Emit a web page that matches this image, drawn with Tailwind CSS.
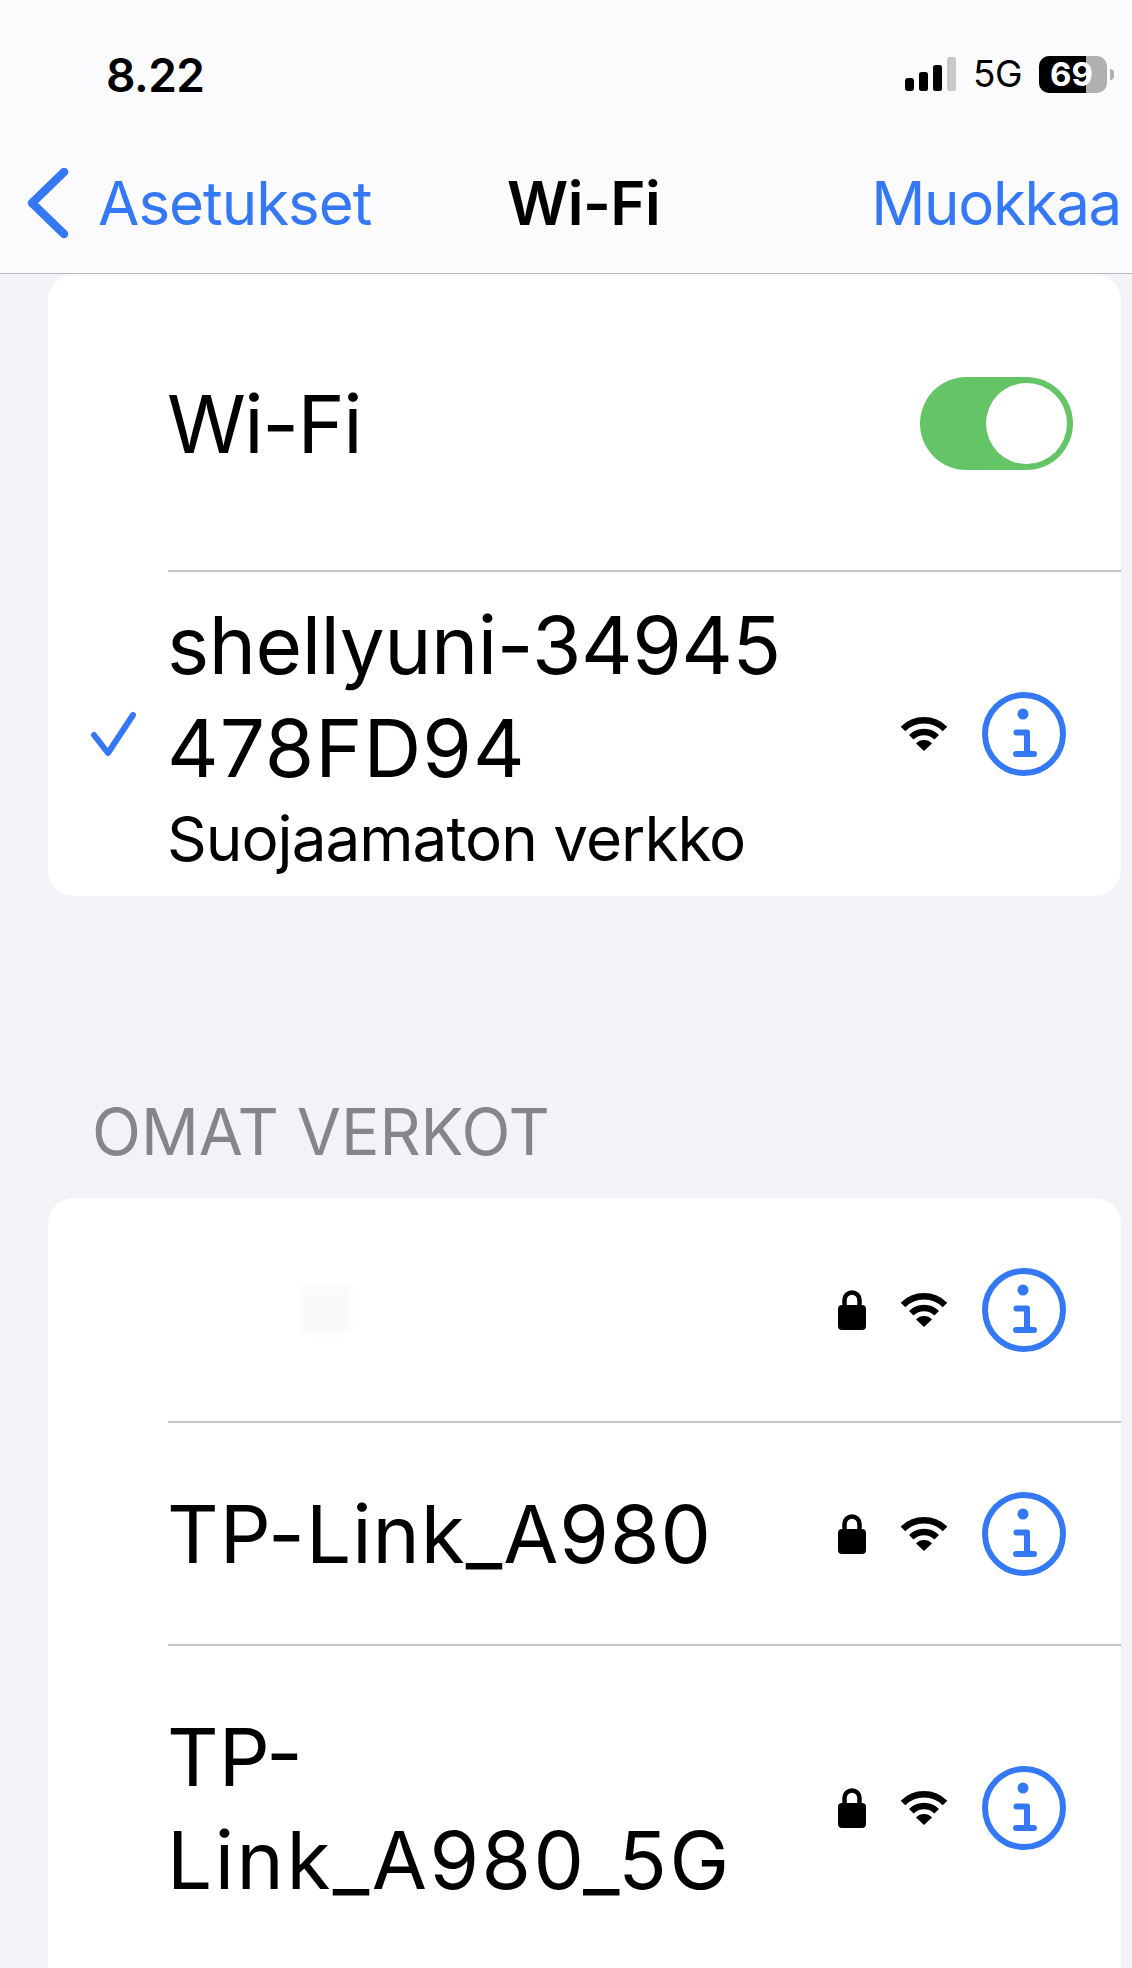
<!DOCTYPE html>
<html lang="fi">
<head>
<meta charset="UTF-8">
<title>Wi-Fi</title>
<script src="https://cdn.jsdelivr.net/npm/@tailwindcss/browser@4"></script>
</head>
<body class="bg-[#f2f2f7] font-['Inter','Liberation_Sans',sans-serif] text-black">
<div class="w-[1132px] h-[1968px] overflow-hidden">

  <!-- Header -->
  <header class="h-[274px] bg-[#fbfbfe] border-b border-[#b9b9bb] flex flex-col">
    <div class="h-[147px] flex items-start justify-between pt-[50px] pl-[106px] pr-[18px]">
      <span class="text-[46px] leading-[50px] font-semibold tracking-[-0.5px]">8.22</span>
      <div class="flex items-center gap-[17px] mt-[5px]">
        <svg width="51" height="34" viewBox="0 0 51 34"><rect x="0" y="21" width="9" height="13" rx="3" fill="#000"/><rect x="14" y="15" width="9" height="19" rx="2.5" fill="#000"/><rect x="28" y="8" width="9" height="26" rx="2.5" fill="#000"/><rect x="42" y="0" width="9" height="34" rx="2.5" fill="#c8c8c8"/></svg>
        <span class="text-[37px] leading-[38px] tracking-[-0.5px]">5G</span>
        <div class="flex items-center">
          <div class="relative w-[68px] h-[37px] rounded-[10px] bg-[#b0b0b0] flex items-center">
            <div class="absolute left-0 top-0 bottom-0 w-[47px] rounded-l-[10px] bg-black"></div>
            <span class="relative w-full text-center pr-[3px] text-white text-[33px] leading-[37px] font-bold">69</span>
          </div>
          <div class="w-[4px] h-[11px] ml-[3px] rounded-r-full bg-[#b0b0b0]"></div>
        </div>
      </div>
    </div>
    <div class="flex-1 grid grid-cols-[481px_1fr_auto] items-center pl-[26px] pr-[11px] pb-[14px]">
      <div class="flex items-center gap-[28px] text-[#3478f6]">
        <svg width="44" height="72" viewBox="0 0 44 72" fill="none" stroke="currentColor" stroke-width="8.5" stroke-linecap="round" stroke-linejoin="round"><path d="M38 5 L6 36 L38 67"/></svg>
        <span class="text-[60px] leading-[70px] tracking-[-1px]">Asetukset</span>
      </div>
      <span class="text-[60px] leading-[70px] font-semibold tracking-[-0.5px]">Wi-Fi</span>
      <span class="text-[60px] leading-[70px] tracking-[-1.3px] text-[#3478f6]">Muokkaa</span>
    </div>
  </header>

  <main class="pl-[48px] pr-[11px]">
    <!-- Current network -->
    <section class="bg-white rounded-[26px]">
      <div class="h-[296px] flex items-center justify-between pl-[119px] pr-[48px]">
        <span class="text-[80px] leading-[90px] tracking-[-1.5px] mt-[4px]">Wi-Fi</span>
        <div class="w-[153px] h-[93px] mt-[2px] rounded-full bg-[#65c466] flex items-center justify-end pr-[6px]">
          <div class="w-[81px] h-[81px] rounded-full bg-white"></div>
        </div>
      </div>
      <div class="ml-[120px] border-t-2 border-[#c6c6c8] h-[326px] flex items-center justify-between relative pr-[55px]">
        <svg class="absolute left-[-80px] top-[137px]" width="52" height="50" viewBox="0 0 52 50" fill="none" stroke="#3478f6" stroke-width="6" stroke-linecap="round" stroke-linejoin="round"><path d="M6 26 L20 44 L45 6"/></svg>
        <div class="self-start mt-[21px] -ml-[1px]">
          <div class="text-[80px] leading-[103px]"><span class="tracking-[-0.5px]">shellyuni-34945</span><br><span class="tracking-[1px]">478FD94</span></div>
          <div class="text-[62px] leading-[80px] tracking-[-1px]">Suojaamaton verkko</div>
        </div>
        <div class="flex items-center gap-[34px]">
          <svg width="48" height="36" viewBox="0 0 48 36" fill="none"><path d="M3 13 A29.7 29.7 0 0 1 45 13 M11.3 21.3 A18 18 0 0 1 36.7 21.3" stroke="#000" stroke-width="6.5"/><path d="M24 35 L16 27.5 A11 11 0 0 1 32 27.5 Z" fill="#000"/></svg>
          <svg width="84" height="84" viewBox="0 0 84 84" fill="none" stroke="#3478f6"><circle cx="42" cy="42" r="39" stroke-width="6"/><circle cx="41" cy="22" r="5.5" fill="#3478f6" stroke="none"/><path d="M34.5 40.5 H45 V62 M34 62 H52" stroke-width="6" stroke-linecap="round" stroke-linejoin="round"/></svg>
        </div>
      </div>
    </section>

    <h2 class="mt-[201px] mb-[31px] pl-[46px] -ml-[2px] text-[64px] leading-[70px] text-[#85858a]">OMAT VERKOT</h2>

    <!-- My networks -->
    <section class="bg-white rounded-t-[26px] h-[770px]">
      <div class="h-[223px] flex items-center justify-between pl-[252px] pr-[55px]">
        <div class="w-[50px] h-[48px] bg-[#fafafa] blur-[2px]"></div>
        <div class="flex items-center gap-[34px]">
          <svg width="28" height="40" viewBox="0 0 28 40"><path d="M6.5 17 V10 a7.5 7.5 0 0 1 15 0 V17" fill="none" stroke="#000" stroke-width="4.5"/><rect x="0" y="15" width="28" height="25" rx="4" fill="#000"/></svg>
          <svg width="48" height="36" viewBox="0 0 48 36" fill="none"><path d="M3 13 A29.7 29.7 0 0 1 45 13 M11.3 21.3 A18 18 0 0 1 36.7 21.3" stroke="#000" stroke-width="6.5"/><path d="M24 35 L16 27.5 A11 11 0 0 1 32 27.5 Z" fill="#000"/></svg>
          <svg width="84" height="84" viewBox="0 0 84 84" fill="none" stroke="#3478f6"><circle cx="42" cy="42" r="39" stroke-width="6"/><circle cx="41" cy="22" r="5.5" fill="#3478f6" stroke="none"/><path d="M34.5 40.5 H45 V62 M34 62 H52" stroke-width="6" stroke-linecap="round" stroke-linejoin="round"/></svg>
        </div>
      </div>
      <div class="ml-[120px] border-t-2 border-[#c6c6c8] h-[223px] flex items-center justify-between pr-[55px]">
        <span class="text-[80px] leading-[103px] tracking-[1px] -ml-[1px]">TP-Link_A980</span>
        <div class="flex items-center gap-[34px]">
          <svg width="28" height="40" viewBox="0 0 28 40"><path d="M6.5 17 V10 a7.5 7.5 0 0 1 15 0 V17" fill="none" stroke="#000" stroke-width="4.5"/><rect x="0" y="15" width="28" height="25" rx="4" fill="#000"/></svg>
          <svg width="48" height="36" viewBox="0 0 48 36" fill="none"><path d="M3 13 A29.7 29.7 0 0 1 45 13 M11.3 21.3 A18 18 0 0 1 36.7 21.3" stroke="#000" stroke-width="6.5"/><path d="M24 35 L16 27.5 A11 11 0 0 1 32 27.5 Z" fill="#000"/></svg>
          <svg width="84" height="84" viewBox="0 0 84 84" fill="none" stroke="#3478f6"><circle cx="42" cy="42" r="39" stroke-width="6"/><circle cx="41" cy="22" r="5.5" fill="#3478f6" stroke="none"/><path d="M34.5 40.5 H45 V62 M34 62 H52" stroke-width="6" stroke-linecap="round" stroke-linejoin="round"/></svg>
        </div>
      </div>
      <div class="ml-[120px] border-t-2 border-[#c6c6c8] h-[326px] flex items-center justify-between pr-[55px]">
        <span class="text-[80px] leading-[103px] -ml-[1px]">TP-<br><span class="tracking-[2.5px]">Link_A980_5G</span></span>
        <div class="flex items-center gap-[34px]">
          <svg width="28" height="40" viewBox="0 0 28 40"><path d="M6.5 17 V10 a7.5 7.5 0 0 1 15 0 V17" fill="none" stroke="#000" stroke-width="4.5"/><rect x="0" y="15" width="28" height="25" rx="4" fill="#000"/></svg>
          <svg width="48" height="36" viewBox="0 0 48 36" fill="none"><path d="M3 13 A29.7 29.7 0 0 1 45 13 M11.3 21.3 A18 18 0 0 1 36.7 21.3" stroke="#000" stroke-width="6.5"/><path d="M24 35 L16 27.5 A11 11 0 0 1 32 27.5 Z" fill="#000"/></svg>
          <svg width="84" height="84" viewBox="0 0 84 84" fill="none" stroke="#3478f6"><circle cx="42" cy="42" r="39" stroke-width="6"/><circle cx="41" cy="22" r="5.5" fill="#3478f6" stroke="none"/><path d="M34.5 40.5 H45 V62 M34 62 H52" stroke-width="6" stroke-linecap="round" stroke-linejoin="round"/></svg>
        </div>
      </div>
    </section>
  </main>
</div>
</body>
</html>
